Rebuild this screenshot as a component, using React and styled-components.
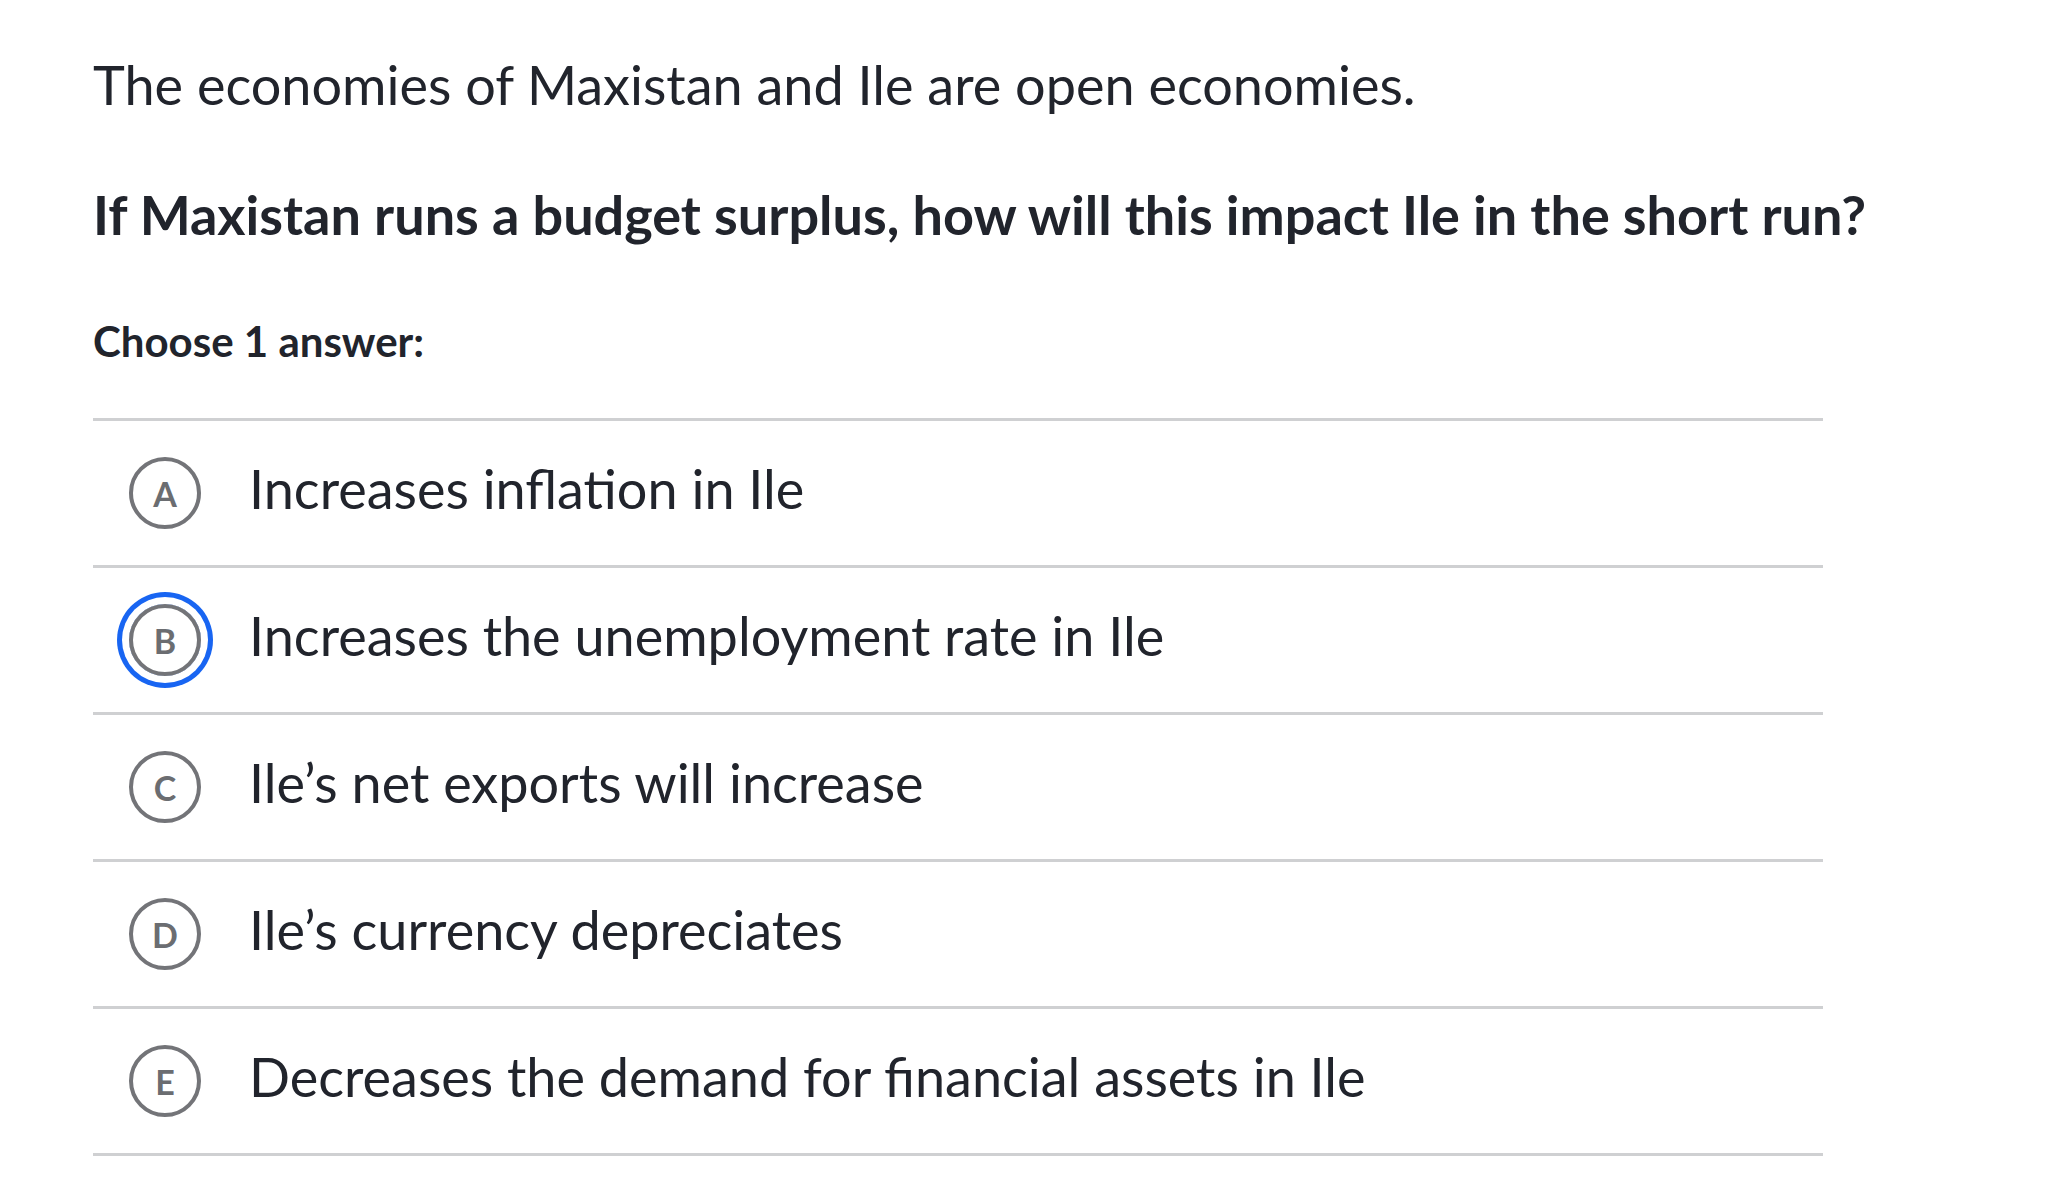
import React from 'react';
import styled, { createGlobalStyle } from 'styled-components';

const GlobalStyle = createGlobalStyle`
  body {
    margin: 0;
    background: #ffffff;
    font-family: Lato, "Noto Sans", sans-serif;
    color: #21242c;
  }
`;

const choices = [
  { letter: 'A', text: 'Increases inflation in Ile' },
  { letter: 'B', text: 'Increases the unemployment rate in Ile', focused: true },
  { letter: 'C', text: 'Ile\u2019s net exports will increase' },
  { letter: 'D', text: 'Ile\u2019s currency depreciates' },
  { letter: 'E', text: 'Decreases the demand for financial assets in Ile' },
];

function App() {
  return (
    <>
      <GlobalStyle />
      <Container>
        <Intro>The economies of Maxistan and Ile are open economies.</Intro>
        <Question>If Maxistan runs a budget surplus, how will this impact Ile in the short run?</Question>
        <Prompt>Choose 1 answer:</Prompt>

        <ChoiceList>
          {choices.map((c) => (
            <Choice key={c.letter}>
              <Bubble $focused={c.focused}>{c.letter}</Bubble>
              <ChoiceText>{c.text}</ChoiceText>
            </Choice>
          ))}
        </ChoiceList>
      </Container>
    </>
  );
}

const Container = styled.div`
  padding: 48px 0 0 93px;
  display: flex;
  flex-direction: column;
  align-items: flex-start;
`;
const Intro = styled.p`
  margin: 0;
  font-size: 54px;
  line-height: 74px;
  font-weight: 400;
  white-space: nowrap;
`;
const Question = styled.p`
  margin: 56px 0 0;
  font-size: 54px;
  line-height: 74px;
  font-weight: 700;
  white-space: nowrap;
`;
const Prompt = styled.p`
  margin: 61px 0 0;
  font-size: 42px;
  line-height: 56px;
  font-weight: 700;
`;
const ChoiceList = styled.ul`
  list-style: none;
  width: 1730px;
  margin: 49px 0 0;
  padding: 0;
  border-top: 3px solid #cfd0d2;
`;
const Choice = styled.li`
  display: flex;
  align-items: center;
  gap: 48px;
  height: 144px;
  padding-left: 36px;
  border-bottom: 3px solid #cfd0d2;
`;
const Bubble = styled.span`
  box-sizing: border-box;
  width: 72px;
  height: 72px;
  flex-shrink: 0;
  border: 4px solid #737478;
  border-radius: 50%;
  display: flex;
  align-items: center;
  justify-content: center;
  font-size: 34px;
  font-weight: 700;
  color: #6b6d71;
  box-shadow: ${(p) => (p.$focused ? '0 0 0 7px #ffffff, 0 0 0 12px #1865f2' : 'none')};
`;
const ChoiceText = styled.span`
  font-size: 54px;
  font-weight: 400;
  line-height: 1;
  padding-bottom: 9px;
`;

export default App;
